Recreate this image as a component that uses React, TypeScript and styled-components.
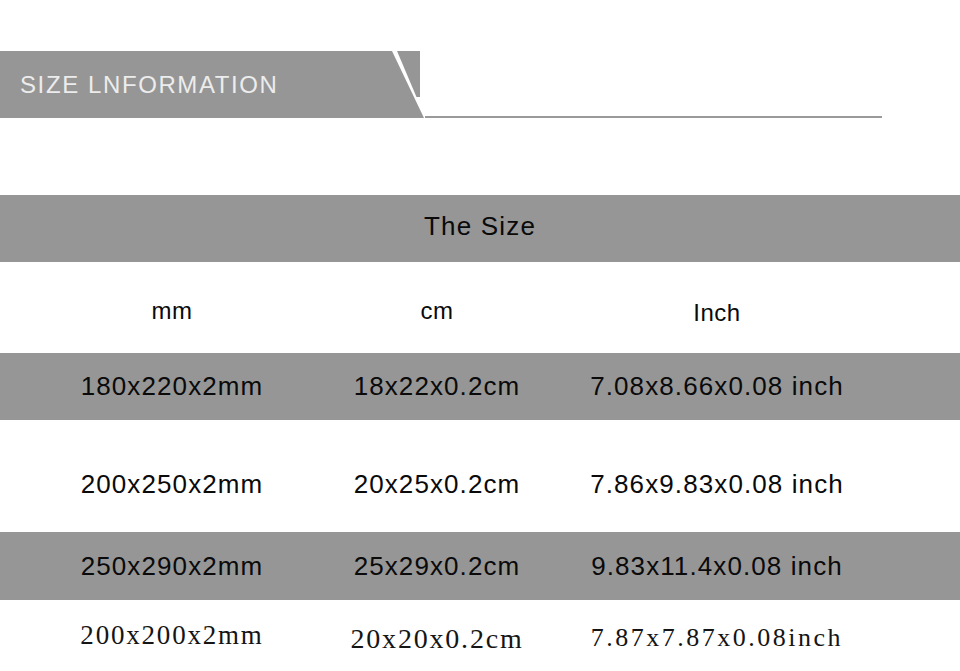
import React from "react";
import styled, { createGlobalStyle } from "styled-components";

const GRAY = "#969696";

const GlobalStyle = createGlobalStyle`
  html, body {
    margin: 0;
    padding: 0;
    background: #ffffff;
  }
  body {
    font-family: "Liberation Sans", Arial, sans-serif;
  }
`;

const Page = styled.div`
  width: 960px;
  padding-top: 51px;
`;

const Banner = styled.header`
  display: flex;
  align-items: stretch;
  height: 67px;
`;

const BannerTitle = styled.h2`
  margin: 0;
  flex: 0 0 390px;
  display: flex;
  align-items: center;
  padding-left: 20px;
  box-sizing: border-box;
  background: ${GRAY};
  color: #ececec;
  font-family: "Liberation Sans", Arial, sans-serif;
  font-weight: 400;
  font-size: 24px;
  letter-spacing: 1.6px;
`;

const Slash = styled.svg`
  flex: 0 0 35px;
  display: block;
`;

const BannerRule = styled.div`
  flex: 0 0 457px;
  border-bottom: 2px solid #9a9a9a;
  box-sizing: border-box;
`;

const Table = styled.section`
  margin-top: 77px;
  display: flex;
  flex-direction: column;
`;

const TitleBand = styled.div`
  height: 67px;
  background: ${GRAY};
  display: flex;
  align-items: center;
  justify-content: center;
  padding-bottom: 4px;
  box-sizing: border-box;
  color: #0a0a0a;
  font-size: 26px;
  letter-spacing: 1.2px;
`;

const Row = styled.div<{ $shade?: boolean; $height: number; $offset?: number }>`
  display: grid;
  grid-template-columns: 344px 186px 374px 56px;
  height: ${(p) => p.$height}px;
  padding-top: ${(p) => p.$offset ?? 0}px;
  box-sizing: border-box;
  background: ${(p) => (p.$shade ? GRAY : "#ffffff")};
`;

const Cell = styled.div<{ $drop?: number }>`
  display: flex;
  align-items: center;
  justify-content: center;
  padding-top: ${(p) => p.$drop ?? 0}px;
  color: #0a0a0a;
  font-family: "Liberation Sans", Arial, sans-serif;
  font-size: 26px;
  letter-spacing: 1.1px;
  white-space: nowrap;
`;

const HeadCell = styled(Cell)`
  font-size: 24px;
  letter-spacing: 0.5px;
`;

const SerifCell = styled(Cell)<{ $size: number; $spacing: number }>`
  font-family: "Liberation Serif", "Times New Roman", serif;
  font-size: ${(p) => p.$size}px;
  letter-spacing: ${(p) => p.$spacing}px;
  color: #151515;
`;

const rows = [
  { mm: "180x220x2mm", cm: "18x22x0.2cm", inch: "7.08x8.66x0.08 inch", shade: true, height: 67, offset: 0 },
  { mm: "200x250x2mm", cm: "20x25x0.2cm", inch: "7.86x9.83x0.08 inch", shade: false, height: 112, offset: 16 },
  { mm: "250x290x2mm", cm: "25x29x0.2cm", inch: "9.83x11.4x0.08 inch", shade: true, height: 68, offset: 0 },
];

export default function App() {
  return (
    <>
      <GlobalStyle />
      <Page>
        <Banner>
          <BannerTitle>SIZE LNFORMATION</BannerTitle>
          <Slash width="35" height="67" viewBox="0 0 35 67" aria-hidden="true">
            <polygon points="0,0 2,0 34,67 0,67" fill={GRAY} />
            <polygon points="7,0 30,0 30,46 26.5,46" fill={GRAY} />
          </Slash>
          <BannerRule />
        </Banner>

        <Table>
          <TitleBand>The Size</TitleBand>
          <Row $height={91} $offset={7}>
            <HeadCell>mm</HeadCell>
            <HeadCell>cm</HeadCell>
            <HeadCell $drop={4}>Inch</HeadCell>
          </Row>
          {rows.map((r) => (
            <Row key={r.mm} $shade={r.shade} $height={r.height} $offset={r.offset}>
              <Cell>{r.mm}</Cell>
              <Cell>{r.cm}</Cell>
              <Cell>{r.inch}</Cell>
            </Row>
          ))}
          <Row $height={71} $offset={0}>
            <SerifCell $size={27} $spacing={1.8}>200x200x2mm</SerifCell>
            <SerifCell $size={28} $spacing={1.8} $drop={6}>20x20x0.2cm</SerifCell>
            <SerifCell $size={26} $spacing={2.5} $drop={4}>7.87x7.87x0.08inch</SerifCell>
          </Row>
        </Table>
      </Page>
    </>
  );
}
